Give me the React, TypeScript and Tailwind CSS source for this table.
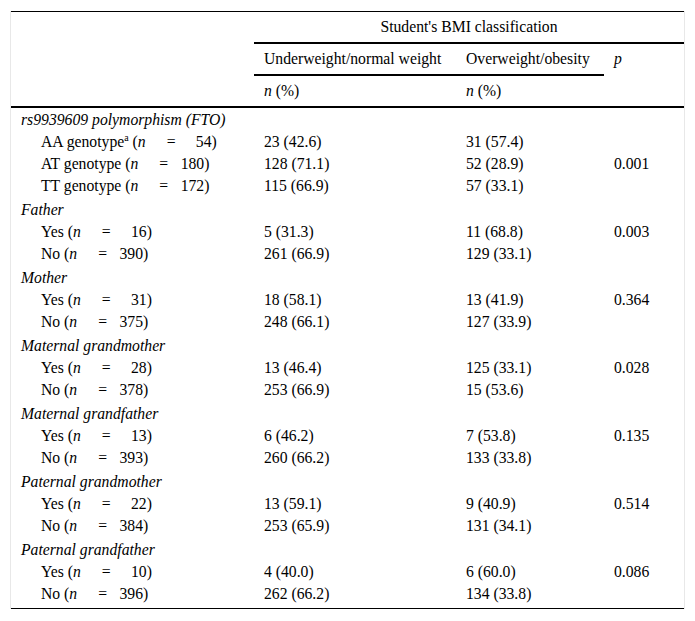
const sections = [
  {
    title: "rs9939609 polymorphism (FTO)",
    first: true,
    rows: [
      { label: "AA genotype", sup: "a", n: "54", a: "23 (42.6)", b: "31 (57.4)", p: "" },
      { label: "AT genotype", n: "180", a: "128 (71.1)", b: "52 (28.9)", p: "0.001" },
      { label: "TT genotype", n: "172", a: "115 (66.9)", b: "57 (33.1)", p: "" },
    ],
  },
  {
    title: "Father",
    rows: [
      { label: "Yes", n: "16", a: "5 (31.3)", b: "11 (68.8)", p: "0.003" },
      { label: "No", n: "390", a: "261 (66.9)", b: "129 (33.1)", p: "" },
    ],
  },
  {
    title: "Mother",
    rows: [
      { label: "Yes", n: "31", a: "18 (58.1)", b: "13 (41.9)", p: "0.364" },
      { label: "No", n: "375", a: "248 (66.1)", b: "127 (33.9)", p: "" },
    ],
  },
  {
    title: "Maternal grandmother",
    rows: [
      { label: "Yes", n: "28", a: "13 (46.4)", b: "125 (33.1)", p: "0.028" },
      { label: "No", n: "378", a: "253 (66.9)", b: "15 (53.6)", p: "" },
    ],
  },
  {
    title: "Maternal grandfather",
    rows: [
      { label: "Yes", n: "13", a: "6 (46.2)", b: "7 (53.8)", p: "0.135" },
      { label: "No", n: "393", a: "260 (66.2)", b: "133 (33.8)", p: "" },
    ],
  },
  {
    title: "Paternal grandmother",
    rows: [
      { label: "Yes", n: "22", a: "13 (59.1)", b: "9 (40.9)", p: "0.514" },
      { label: "No", n: "384", a: "253 (65.9)", b: "131 (34.1)", p: "" },
    ],
  },
  {
    title: "Paternal grandfather",
    rows: [
      { label: "Yes", n: "10", a: "4 (40.0)", b: "6 (60.0)", p: "0.086" },
      { label: "No", n: "396", a: "262 (66.2)", b: "134 (33.8)", p: "" },
    ],
  },
];

type Row = { label: string; sup?: string; n: string; a: string; b: string; p: string };

const Label = ({ row }: { row: Row }) => (
  <span className="whitespace-pre">
    {row.label}
    {row.sup && <span className="relative -top-[6px] text-[10px] leading-none">{row.sup}</span>} (<i>n</i>
    <span className="ml-[21px] mr-[12px]">=</span>
    <span className="inline-block w-[24px] text-right">{row.n}</span>)
  </span>
);

export default function App() {
  return (
    <div className="min-h-[621px] bg-white pt-[11px] pl-[10px] font-['Liberation_Serif',serif] text-[15.7px] text-black">
      <div className="w-[675px] border-x border-[#e8e8e8]">
        <table className="w-full table-fixed border-collapse border-y border-black">
          <colgroup>
            <col className="w-[243px]" />
            <col className="w-[202px]" />
            <col className="w-[148px]" />
            <col />
          </colgroup>
          <thead>
            <tr className="h-[31px]">
              <th rowSpan={3} className="border-b-2 border-black" />
              <th colSpan={3} className="border-b-2 border-black text-center font-normal">
                Student's BMI classification
              </th>
            </tr>
            <tr className="h-[32px]">
              <th className="border-b-2 border-black pl-[10px] text-left font-normal">Underweight/normal weight</th>
              <th className="border-b-2 border-black pl-[10px] text-left font-normal">Overweight/obesity</th>
              <th className="pl-[10px] text-left font-normal italic">p</th>
            </tr>
            <tr className="h-[32px]">
              <th className="border-b-2 border-black pl-[10px] text-left font-normal">
                <i>n</i> (%)
              </th>
              <th className="border-b-2 border-black pl-[10px] text-left font-normal">
                <i>n</i> (%)
              </th>
              <th className="border-b-2 border-black" />
            </tr>
          </thead>
          <tbody>
            {sections.map((s, si) => (
              <>
                <tr key={s.title} className={s.first ? "h-[24px]" : "h-[24px]"}>
                  <td colSpan={4} className="pl-[10px] align-bottom italic leading-[22px]">
                    {s.title}
                  </td>
                </tr>
                {s.rows.map((r, ri) => {
                  const last = si === sections.length - 1 && ri === s.rows.length - 1;
                  return (
                    <tr key={s.title + ri} className={last ? "h-[26px]" : "h-[22px]"}>
                      <td className="pl-[30px] align-top leading-[22px]">
                        <Label row={r} />
                      </td>
                      <td className="pl-[10px] align-top leading-[22px]">{r.a}</td>
                      <td className="pl-[10px] align-top leading-[22px]">{r.b}</td>
                      <td className="pl-[10px] align-top leading-[22px]">{r.p}</td>
                    </tr>
                  );
                })}
              </>
            ))}
          </tbody>
        </table>
      </div>
    </div>
  );
}
